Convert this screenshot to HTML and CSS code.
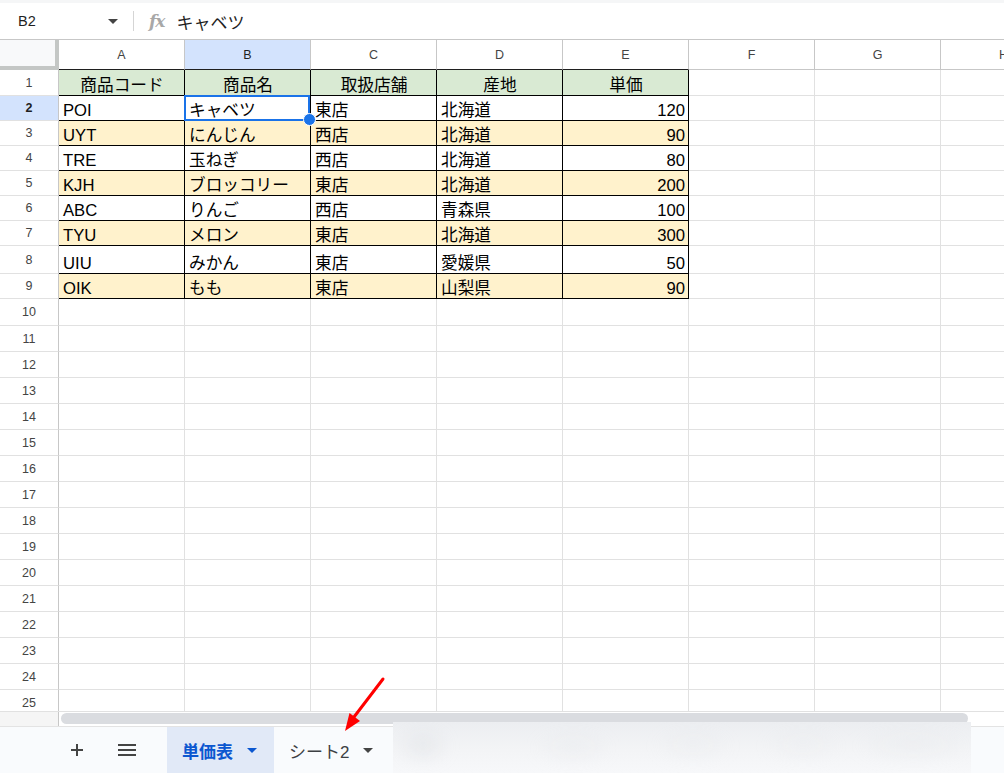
FILE: index.html
```html
<!DOCTYPE html>
<html lang="ja">
<head>
<meta charset="utf-8">
<title>Sheet</title>
<link rel="stylesheet" href="styles.css">
</head>
<body>
<div class="app">
  <div class="topstrip"></div>
  <div class="formula-bar">
    <div class="namebox">
      <span class="name">B2</span>
      <svg class="nb-caret" width="10" height="5" viewBox="0 0 10 5"><path d="M0 0 L10 0 L5 5 Z" fill="#444"/></svg>
    </div>
    <div class="fb-divider"></div>
    <span class="fx">fx</span>
    <span class="formula">キャベツ</span>
  </div>

  <div class="sheet">
    <div class="row colhead">
      <div class="corner"></div>
      <div class="ch tb">A</div>
      <div class="ch tb sel">B</div>
      <div class="ch tb">C</div>
      <div class="ch tb">D</div>
      <div class="ch tb">E</div>
      <div class="ch">F</div>
      <div class="ch">G</div>
      <div class="ch">H</div>
    </div>

    <div class="row h26 green">
      <div class="rh">1</div>
      <div class="c t center">商品コード</div>
      <div class="c t center">商品名</div>
      <div class="c t center">取扱店舗</div>
      <div class="c t center">産地</div>
      <div class="c t center">単価</div>
      <div class="c"></div><div class="c"></div><div class="c"></div>
    </div>

    <div class="row h25">
      <div class="rh sel">2</div>
      <div class="c t">POI</div>
      <div class="c t active">キャベツ</div>
      <div class="c t">東店</div>
      <div class="c t">北海道</div>
      <div class="c t num">120</div>
      <div class="c"></div><div class="c"></div><div class="c"></div>
    </div>

    <div class="row h25 yellow">
      <div class="rh">3</div>
      <div class="c t">UYT</div>
      <div class="c t">にんじん</div>
      <div class="c t">西店</div>
      <div class="c t">北海道</div>
      <div class="c t num">90</div>
      <div class="c"></div><div class="c"></div><div class="c"></div>
    </div>

    <div class="row h25">
      <div class="rh">4</div>
      <div class="c t">TRE</div>
      <div class="c t">玉ねぎ</div>
      <div class="c t">西店</div>
      <div class="c t">北海道</div>
      <div class="c t num">80</div>
      <div class="c"></div><div class="c"></div><div class="c"></div>
    </div>

    <div class="row h25 yellow">
      <div class="rh">5</div>
      <div class="c t">KJH</div>
      <div class="c t">ブロッコリー</div>
      <div class="c t">東店</div>
      <div class="c t">北海道</div>
      <div class="c t num">200</div>
      <div class="c"></div><div class="c"></div><div class="c"></div>
    </div>

    <div class="row h25">
      <div class="rh">6</div>
      <div class="c t">ABC</div>
      <div class="c t">りんご</div>
      <div class="c t">西店</div>
      <div class="c t">青森県</div>
      <div class="c t num">100</div>
      <div class="c"></div><div class="c"></div><div class="c"></div>
    </div>

    <div class="row h25 yellow">
      <div class="rh">7</div>
      <div class="c t">TYU</div>
      <div class="c t">メロン</div>
      <div class="c t">東店</div>
      <div class="c t">北海道</div>
      <div class="c t num">300</div>
      <div class="c"></div><div class="c"></div><div class="c"></div>
    </div>

    <div class="row h28">
      <div class="rh">8</div>
      <div class="c t">UIU</div>
      <div class="c t">みかん</div>
      <div class="c t">東店</div>
      <div class="c t">愛媛県</div>
      <div class="c t num">50</div>
      <div class="c"></div><div class="c"></div><div class="c"></div>
    </div>

    <div class="row h25 yellow">
      <div class="rh">9</div>
      <div class="c t">OIK</div>
      <div class="c t">もも</div>
      <div class="c t">東店</div>
      <div class="c t">山梨県</div>
      <div class="c t num">90</div>
      <div class="c"></div><div class="c"></div><div class="c"></div>
    </div>

    <div class="row h27"><div class="rh">10</div><div class="c"></div><div class="c"></div><div class="c"></div><div class="c"></div><div class="c"></div><div class="c"></div><div class="c"></div><div class="c"></div></div>
    <div class="row h26"><div class="rh">11</div><div class="c"></div><div class="c"></div><div class="c"></div><div class="c"></div><div class="c"></div><div class="c"></div><div class="c"></div><div class="c"></div></div>
    <div class="row h26"><div class="rh">12</div><div class="c"></div><div class="c"></div><div class="c"></div><div class="c"></div><div class="c"></div><div class="c"></div><div class="c"></div><div class="c"></div></div>
    <div class="row h26"><div class="rh">13</div><div class="c"></div><div class="c"></div><div class="c"></div><div class="c"></div><div class="c"></div><div class="c"></div><div class="c"></div><div class="c"></div></div>
    <div class="row h26"><div class="rh">14</div><div class="c"></div><div class="c"></div><div class="c"></div><div class="c"></div><div class="c"></div><div class="c"></div><div class="c"></div><div class="c"></div></div>
    <div class="row h26"><div class="rh">15</div><div class="c"></div><div class="c"></div><div class="c"></div><div class="c"></div><div class="c"></div><div class="c"></div><div class="c"></div><div class="c"></div></div>
    <div class="row h26"><div class="rh">16</div><div class="c"></div><div class="c"></div><div class="c"></div><div class="c"></div><div class="c"></div><div class="c"></div><div class="c"></div><div class="c"></div></div>
    <div class="row h26"><div class="rh">17</div><div class="c"></div><div class="c"></div><div class="c"></div><div class="c"></div><div class="c"></div><div class="c"></div><div class="c"></div><div class="c"></div></div>
    <div class="row h26"><div class="rh">18</div><div class="c"></div><div class="c"></div><div class="c"></div><div class="c"></div><div class="c"></div><div class="c"></div><div class="c"></div><div class="c"></div></div>
    <div class="row h26"><div class="rh">19</div><div class="c"></div><div class="c"></div><div class="c"></div><div class="c"></div><div class="c"></div><div class="c"></div><div class="c"></div><div class="c"></div></div>
    <div class="row h26"><div class="rh">20</div><div class="c"></div><div class="c"></div><div class="c"></div><div class="c"></div><div class="c"></div><div class="c"></div><div class="c"></div><div class="c"></div></div>
    <div class="row h26"><div class="rh">21</div><div class="c"></div><div class="c"></div><div class="c"></div><div class="c"></div><div class="c"></div><div class="c"></div><div class="c"></div><div class="c"></div></div>
    <div class="row h26"><div class="rh">22</div><div class="c"></div><div class="c"></div><div class="c"></div><div class="c"></div><div class="c"></div><div class="c"></div><div class="c"></div><div class="c"></div></div>
    <div class="row h26"><div class="rh">23</div><div class="c"></div><div class="c"></div><div class="c"></div><div class="c"></div><div class="c"></div><div class="c"></div><div class="c"></div><div class="c"></div></div>
    <div class="row h26"><div class="rh">24</div><div class="c"></div><div class="c"></div><div class="c"></div><div class="c"></div><div class="c"></div><div class="c"></div><div class="c"></div><div class="c"></div></div>
    <div class="row h26 last"><div class="rh">25</div><div class="c"></div><div class="c"></div><div class="c"></div><div class="c"></div><div class="c"></div><div class="c"></div><div class="c"></div><div class="c"></div></div>
  </div>

  <div class="scrollrow">
    <div class="scroll-left"></div>
    <div class="scroll-track"><div class="thumb"></div></div>
  </div>

  <div class="tabbar">
    <div class="tb-btn">
      <svg width="14" height="14" viewBox="0 0 14 14"><path d="M7 1 V13 M1 7 H13" stroke="#444" stroke-width="2" fill="none"/></svg>
    </div>
    <div class="tb-btn">
      <svg width="18" height="12" viewBox="0 0 18 12"><path d="M0 1 H18 M0 6 H18 M0 11 H18" stroke="#444" stroke-width="2" fill="none"/></svg>
    </div>
    <div class="tab tab-active">
      <span>単価表</span>
      <svg width="10" height="5" viewBox="0 0 10 5"><path d="M0 0 L10 0 L5 5 Z" fill="#0b57d0"/></svg>
    </div>
    <div class="tab">
      <span>シート2</span>
      <svg width="10" height="5" viewBox="0 0 10 5"><path d="M0 0 L10 0 L5 5 Z" fill="#444"/></svg>
    </div>
  </div>

  <div class="blurpanel"><div class="blobs"></div></div>

  <svg class="arrow" width="1004" height="773" viewBox="0 0 1004 773">
    <path d="M383 679 L354 717" stroke="#ff0000" stroke-width="3" stroke-linecap="round" fill="none"/>
    <path d="M345 731 L349.5 713 L360 721 Z" fill="#ff0000"/>
  </svg>
</div>
</body>
</html>
```

FILE: styles.css
```css
* { box-sizing: border-box; }
html, body { margin: 0; padding: 0; }
body {
  width: 1004px;
  height: 773px;
  overflow: hidden;
  background: #fff;
  font-family: "Liberation Sans", Arial, "Noto Sans CJK JP", sans-serif;
  color: #1f1f1f;
}
.app { position: relative; width: 1004px; height: 773px; overflow: hidden; }

.topstrip { height: 3px; background: #f5f6f7; }
.formula-bar {
  height: 37px;
  display: flex;
  align-items: center;
  border-bottom: 1px solid #c7c7c7;
}
.namebox {
  width: 133px;
  display: flex;
  align-items: center;
  padding-left: 18px;
  padding-right: 15px;
  justify-content: space-between;
}
.name { font-size: 14.5px; color: #1f1f1f; }
.nb-caret { margin-top: 1px; }
.fb-divider { width: 1px; height: 20px; background: #d5d5d5; }
.fx {
  margin-left: 15px;
  font-family: "DejaVu Serif", "Liberation Serif", serif;
  font-style: italic;
  font-weight: bold;
  font-size: 17px;
  color: #a8a8a8;
  letter-spacing: -1px;
}
.formula {
  margin-left: 12px;
  font-family: "Liberation Sans", "Noto Sans CJK JP", sans-serif;
  font-size: 17px;
  color: #1f1f1f;
}

.sheet { height: 671px; overflow: hidden; }
.row {
  display: grid;
  grid-template-columns: 59px repeat(8, 126px);
  width: 1067px;
}
.colhead { height: 30px; }
.h25 { height: 25px; }
.h26 { height: 26px; }
.h27 { height: 27px; }
.h28 { height: 28px; }

.corner {
  background: #f8f9fa;
  border-right: 4px solid #c4c7c5;
  border-bottom: 4px solid #c4c7c5;
}
.ch {
  display: flex;
  align-items: center;
  justify-content: center;
  font-size: 12.5px;
  color: #444;
  background: #fff;
  border-right: 1px solid #c7c7c7;
  border-bottom: 1px solid #c7c7c7;
  padding-top: 1px;
}
.ch.tb { border-bottom-color: #1f1f1f; }
.ch.sel { background: #d3e3fd; color: #1f1f1f; }

.rh {
  display: flex;
  align-items: center;
  justify-content: center;
  font-size: 12.5px;
  color: #444;
  background: #fff;
  border-right: 1px solid #c7c7c7;
  border-bottom: 1px solid #e1e1e1;
}
.rh.sel { background: #d3e3fd; color: #1f1f1f; font-weight: bold; }

.c {
  display: flex;
  align-items: flex-end;
  padding: 0 3px 0 4px;
  font-size: 16.67px;
  line-height: 19px;
  white-space: nowrap;
  overflow: visible;
  color: #000;
  border-right: 1px solid #e1e1e1;
  border-bottom: 1px solid #e1e1e1;
  font-family: "Liberation Sans", Arial, "Noto Sans CJK JP", sans-serif;
}
.c.t { border-right-color: #000; border-bottom-color: #000; }
.c.center { justify-content: center; }
.c.num { justify-content: flex-end; }

.green .c.t { background: #d9ead3; }
.yellow .c.t { background: #fff2cc; }

.c.active { position: relative; }
.c.active::before {
  content: "";
  position: absolute;
  left: -1px; top: -1px; right: 0; bottom: -1px;
  border: 2px solid #1a73e8;
  pointer-events: none;
}
.c.active::after {
  content: "";
  position: absolute;
  right: -6px; bottom: -6px;
  width: 11px; height: 11px;
  border-radius: 50%;
  background: #1a73e8;
  border: 1px solid #fff;
  z-index: 2;
}

.scrollrow {
  height: 15px;
  display: flex;
  border-top: 1px solid #e1e1e1;
}
.scroll-left {
  width: 59px;
  background: #f5f5f5;
  border-right: 1px solid #c7c7c7;
}
.scroll-track {
  flex: 1;
  padding: 1px 0 0 2px;
}
.thumb {
  width: 907px;
  height: 11px;
  border-radius: 6px;
  background: #dadce0;
}

.tabbar {
  height: 47px;
  border-top: 1px solid #e3e3e3;
  background: #f9fbfd;
  display: flex;
  align-items: stretch;
  padding-left: 57px;
}
.tb-btn {
  width: 40px;
  display: flex;
  align-items: center;
  justify-content: center;
  margin-right: 10px;
}
.tab {
  display: flex;
  align-items: center;
  gap: 14px;
  padding: 0 16px 0 15px;
  font-size: 17px;
  color: #3c4043;
  font-family: "Liberation Sans", Arial, "Noto Sans CJK JP", sans-serif;
}
.tab-active {
  margin-left: 10px;
  width: 107px;
  background: #e1e9f7;
  color: #0b57d0;
  font-weight: bold;
}
.tab span { padding-top: 1px; }

.blurpanel {
  position: absolute;
  left: 393px;
  top: 722px;
  width: 578px;
  height: 51px;
  background: linear-gradient(180deg, #eceef1 0%, #f3f4f6 55%, #f7f8fa 100%);
  overflow: hidden;
}
.blobs {
  position: absolute;
  inset: 0;
  background:
    radial-gradient(ellipse 26px 18px at 30px 24px, rgba(205,209,215,0.35), transparent),
    radial-gradient(ellipse 40px 16px at 180px 26px, rgba(220,223,227,0.25), transparent),
    radial-gradient(ellipse 40px 16px at 300px 24px, rgba(222,224,228,0.22), transparent),
    radial-gradient(ellipse 40px 16px at 410px 24px, rgba(224,226,230,0.22), transparent),
    radial-gradient(ellipse 60px 16px at 520px 24px, rgba(220,223,227,0.25), transparent);
  filter: blur(8px);
}

.arrow {
  position: absolute;
  left: 0; top: 0;
  pointer-events: none;
}
```
